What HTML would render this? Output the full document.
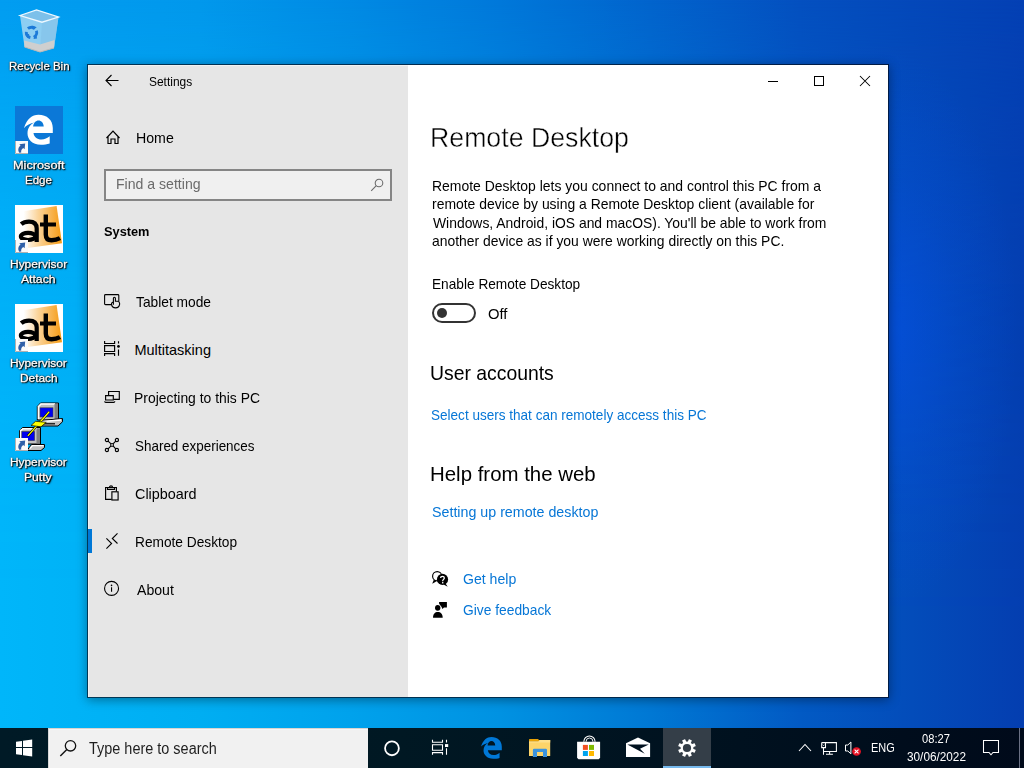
<!DOCTYPE html>
<html><head><meta charset="utf-8"><style>
*{margin:0;padding:0;box-sizing:border-box}
html,body{width:1024px;height:768px;overflow:hidden}
body{position:relative;font-family:"Liberation Sans", sans-serif;background:#0a7ad8}
.t{position:absolute;white-space:pre;line-height:1;font-family:"Liberation Sans", sans-serif}
.a{position:absolute}
svg{position:absolute;overflow:visible}
.lbl{text-shadow:0 0 1px #000,1px 1px 2px #000,0 1px 3px rgba(0,0,0,.8)}
</style></head>
<body>
<div class="a" style="left:0;top:0;width:1024px;height:768px;background:linear-gradient(to right,rgb(2,157,241) 0px,rgb(2,152,236) 200px,rgb(0,138,228) 350px,rgb(0,120,218) 500px,rgb(2,100,205) 650px,rgb(4,80,192) 800px,rgb(4,64,180) 1024px)"></div>
<div class="a" style="left:0;top:0;width:1024px;height:768px;background:linear-gradient(to right,rgb(0,182,250) 0px,rgb(0,174,242) 200px,rgb(0,162,236) 350px,rgb(0,146,226) 500px,rgb(0,120,212) 650px,rgb(2,90,196) 800px,rgb(4,62,176) 1024px);-webkit-mask-image:linear-gradient(to bottom,rgba(0,0,0,0) 0px,rgba(0,0,0,.33) 90px,rgba(0,0,0,.62) 200px,rgba(0,0,0,.78) 300px,rgba(0,0,0,.95) 500px,#000 620px,#000 768px);mask-image:linear-gradient(to bottom,rgba(0,0,0,0) 0px,rgba(0,0,0,.33) 90px,rgba(0,0,0,.62) 200px,rgba(0,0,0,.78) 300px,rgba(0,0,0,.95) 500px,#000 620px,#000 768px)"></div>
<div class="a" style="left:0;top:0;width:1024px;height:768px;background:radial-gradient(ellipse 130px 280px at 888px 330px,rgba(6,80,236,.55) 0%,rgba(6,80,236,.2) 55%,rgba(6,80,236,0) 100%)"></div>
<svg style="left:15px;top:7px" width="48" height="48" viewBox="0 0 48 48">
<path d="M5 8.5 L21.5 3 L43.5 10 L39 41 L25 45 L9.5 40 Z" fill="#a6d6f2" fill-opacity="0.85"/>
<path d="M27 15.2 L43.5 10 L39 41 L25 45 Z" fill="#86c4ea" fill-opacity="0.8"/>
<path d="M5 8.5 L21.5 3 L43.5 10 L27 15.2 Z" fill="#7cc0ea"/>
<path d="M9 33.5 L25 37.5 L39.5 33 L39 41 L25 45 L9.5 40 Z" fill="#cfcfcf"/>
<path d="M9.5 40 L25 45 L39 41" fill="none" stroke="#b8b8b8" stroke-width="1"/>
<path d="M5 8.5 L21.5 3 L43.5 10 L27 15.2 Z" fill="none" stroke="#eef8ff" stroke-width="1.3"/>
<g transform="translate(16.5 25.5) rotate(-20)"><circle r="5.2" fill="none" stroke="#1c7ad8" stroke-width="2.9" stroke-dasharray="7.5 3.4"/><path d="M3.2 -6.2 L6.8 -3.2 L2.2 -2.2 Z M-6.8 -0.6 L-5.6 4 L-2.6 0.6 Z M3.6 4.6 L-0.6 6.6 L3.2 7.6 Z" fill="#1c7ad8"/></g>
</svg>
<svg style="left:15px;top:106px" width="48" height="48" viewBox="0 0 48 48">
<rect x="0" y="0" width="48" height="48" fill="#0b78d7"/>
<path d="M9 21.9 C12 13 17 8.75 23.5 8.75 C32 8.75 37.8 14 37.8 22 V27 H18.5 C19 31 22 33.5 26.5 33.5 C29.5 33.5 32.5 32 34.7 30.3 V37.5 C32 38.5 29 38.75 26 38.75 C17 38.75 12.5 33 12.5 27.5 C12.5 22.5 15 18.5 19.4 16.6 C15.5 17.5 11.5 19.5 9 21.9 Z M18.1 20.6 C18.6 16.5 20.8 14.4 23.5 14.4 C26.3 14.4 28.5 16.5 28.75 20.6 Z" fill="#fff" fill-rule="evenodd"/>
</svg>
<svg style="left:15px;top:141px" width="13" height="13" viewBox="0 0 13 13"><rect x="0" y="0" width="13" height="13" fill="#fafafa"/><path d="M0.5 0 V12.5 H13" fill="none" stroke="#b0b0b0" stroke-width="1"/><path d="M4.2 11.8 C2.6 9.5 3 6.5 5.5 4.6 L4.3 3.2 L10.2 2.4 L9.6 8.3 L8.2 6.9 C6.6 8 5.8 9.8 6.3 11.6 Z" fill="#2e5fa8"/></svg>
<svg style="left:15px;top:205px" width="48" height="48" viewBox="0 0 48 48">
<defs><linearGradient id="og205" x1="0" y1="0" x2="1" y2="0"><stop offset="0" stop-color="#fff"/><stop offset="0.12" stop-color="#fff"/><stop offset="0.45" stop-color="#fbd49a"/><stop offset="1" stop-color="#f59a12"/></linearGradient></defs>
<rect x="0" y="0" width="48" height="48" fill="#fff"/>
<path d="M3.5 7 L41.6 0.9 L47 38.2 L12.5 43 L3.5 43 Z" fill="url(#og205)"/>
<g fill="none" stroke="#000" stroke-width="4.2">
<path d="M6.2 19.2 C8.5 17.2 11.2 16.6 14 16.6 C19.5 16.6 21.7 19 21.7 23.5 V37"/>
<ellipse cx="13.1" cy="31.4" rx="7.2" ry="3.6"/>
<path d="M30.8 9.4 V29.5 C30.8 33.5 33 35.3 36.5 35.3 C39.5 35.3 42.5 34.6 45 33.2" stroke-width="4.4"/>
<path d="M25 19.5 H41" stroke-width="4"/>
</g>
</svg>
<svg style="left:15px;top:240px" width="13" height="13" viewBox="0 0 13 13"><rect x="0" y="0" width="13" height="13" fill="#fafafa"/><path d="M0.5 0 V12.5 H13" fill="none" stroke="#b0b0b0" stroke-width="1"/><path d="M4.2 11.8 C2.6 9.5 3 6.5 5.5 4.6 L4.3 3.2 L10.2 2.4 L9.6 8.3 L8.2 6.9 C6.6 8 5.8 9.8 6.3 11.6 Z" fill="#2e5fa8"/></svg>
<svg style="left:15px;top:304px" width="48" height="48" viewBox="0 0 48 48">
<defs><linearGradient id="og304" x1="0" y1="0" x2="1" y2="0"><stop offset="0" stop-color="#fff"/><stop offset="0.12" stop-color="#fff"/><stop offset="0.45" stop-color="#fbd49a"/><stop offset="1" stop-color="#f59a12"/></linearGradient></defs>
<rect x="0" y="0" width="48" height="48" fill="#fff"/>
<path d="M3.5 7 L41.6 0.9 L47 38.2 L12.5 43 L3.5 43 Z" fill="url(#og304)"/>
<g fill="none" stroke="#000" stroke-width="4.2">
<path d="M6.2 19.2 C8.5 17.2 11.2 16.6 14 16.6 C19.5 16.6 21.7 19 21.7 23.5 V37"/>
<ellipse cx="13.1" cy="31.4" rx="7.2" ry="3.6"/>
<path d="M30.8 9.4 V29.5 C30.8 33.5 33 35.3 36.5 35.3 C39.5 35.3 42.5 34.6 45 33.2" stroke-width="4.4"/>
<path d="M25 19.5 H41" stroke-width="4"/>
</g>
</svg>
<svg style="left:15px;top:339px" width="13" height="13" viewBox="0 0 13 13"><rect x="0" y="0" width="13" height="13" fill="#fafafa"/><path d="M0.5 0 V12.5 H13" fill="none" stroke="#b0b0b0" stroke-width="1"/><path d="M4.2 11.8 C2.6 9.5 3 6.5 5.5 4.6 L4.3 3.2 L10.2 2.4 L9.6 8.3 L8.2 6.9 C6.6 8 5.8 9.8 6.3 11.6 Z" fill="#2e5fa8"/></svg>
<svg style="left:15px;top:400px" width="48" height="52" viewBox="0 0 48 52">
<path d="M22.3 6.5 L25.5 3 L43.5 3 L43.5 20 L22.3 20 Z" fill="#c0c0c0" stroke="#000" stroke-width="1"/>
<path d="M23.5 19 V6.5 L26 4 H40" fill="none" stroke="#fff" stroke-width="1.6"/>
<rect x="39.5" y="4" width="3.5" height="15.5" fill="#808080"/>
<rect x="25" y="7.8" width="13" height="9.2" fill="#0000f0" stroke="#404040" stroke-width="0.6"/>
<path d="M20.5 26 L26.5 20.5 L47.5 18.5 L47.5 21.8 L43 26 Z" fill="#c0c0c0" stroke="#000" stroke-width="1"/>
<path d="M24 24.5 L27.5 21.5 L46 20" fill="none" stroke="#fff" stroke-width="1.4"/>
<path d="M28 23.8 H40" stroke="#000" stroke-width="1.2"/>
<path d="M4.5 30.5 L7.5 27.5 L25.5 27.5 L25.5 44 L4.5 44 Z" fill="#c0c0c0" stroke="#000" stroke-width="1"/>
<path d="M5.7 43 V30.5 L8 28.7 H22" fill="none" stroke="#fff" stroke-width="1.6"/>
<rect x="21.5" y="28.5" width="3.5" height="15" fill="#808080"/>
<rect x="6.8" y="31.5" width="12.8" height="9.1" fill="#0000f0" stroke="#404040" stroke-width="0.6"/>
<path d="M12 50.5 L16.5 44.5 L29.5 44.5 L29.5 47.5 L26 50.5 Z" fill="#c0c0c0" stroke="#000" stroke-width="1"/>
<path d="M15 48.5 L17.5 45.6 L28.5 45.6" fill="none" stroke="#fff" stroke-width="1.3"/>
<path d="M34.2 11.8 L12.9 35.9" stroke="#000" stroke-width="2.4"/>
<path d="M34.2 11.8 L12.9 35.9" stroke="#ffff00" stroke-width="1.3"/>
<path d="M16 25.5 L20.5 21.3 L31.3 22.3 L26 26.8 Z" fill="#ffff00" stroke="#000" stroke-width="0.7"/>
</svg>
<svg style="left:15px;top:438px" width="13" height="13" viewBox="0 0 13 13"><rect x="0" y="0" width="13" height="13" fill="#fafafa"/><path d="M0.5 0 V12.5 H13" fill="none" stroke="#b0b0b0" stroke-width="1"/><path d="M4.2 11.8 C2.6 9.5 3 6.5 5.5 4.6 L4.3 3.2 L10.2 2.4 L9.6 8.3 L8.2 6.9 C6.6 8 5.8 9.8 6.3 11.6 Z" fill="#2e5fa8"/></svg>
<div class="a" style="left:87px;top:64px;width:802px;height:634px;border:1px solid rgba(0,8,24,.72);box-shadow:0 2px 10px rgba(0,0,0,0.38)"></div>
<div class="a" style="left:88px;top:65px;width:320px;height:632px;background:#e6e6e6;border-top:1px solid #f2f2f2;border-left:1px solid #f2f2f2"></div>
<div class="a" style="left:408px;top:65px;width:480px;height:632px;background:#fff"></div>
<svg style="left:105px;top:74px" width="14" height="13" viewBox="0 0 14 13"><path d="M1 6.5 H13.5 M6.5 1 L1 6.5 L6.5 12" fill="none" stroke="#000" stroke-width="1.1"/></svg>
<svg style="left:105px;top:130px" width="16" height="15" viewBox="0 0 16 15"><path d="M1.5 8 L8 1.2 L14.5 8 M3 6.5 V13.5 H6 V9 H10 V13.5 H13 V6.5" fill="none" stroke="#000" stroke-width="1.2"/></svg>
<div class="a" style="left:104px;top:169px;width:288px;height:32px;border:2px solid #858585;background:#f0f0f0"></div>
<svg style="left:370px;top:178px" width="14" height="14" viewBox="0 0 14 14"><circle cx="9" cy="5" r="3.8" fill="none" stroke="#6a6a6a" stroke-width="1.05"/><path d="M6.3 7.7 L1.2 12.8" stroke="#6a6a6a" stroke-width="1.1"/></svg>
<svg style="left:104px;top:294px" width="17" height="17" viewBox="0 0 17 17"><path d="M7.6 10.6 H1.5 Q0.6 10.6 0.6 9.7 V1.5 Q0.6 0.6 1.5 0.6 H13.9 Q14.8 0.6 14.8 1.5 V7.3" fill="none" stroke="#000" stroke-width="1.1"/><path d="M9.4 10.8 V4.3 A1 1 0 0 1 11.4 4.3 V7.3 H13.6 A2.1 2.1 0 0 1 15.6 9.3 V10.4 A4.1 4.1 0 0 1 7.5 10.4 V9.9 A1.9 1.9 0 0 1 9.4 8" fill="none" stroke="#000" stroke-width="1.1"/></svg>
<svg style="left:104px;top:341px" width="17" height="16" viewBox="0 0 17 16"><path d="M0.6 0 V2.5 H10.6 V0 M0.6 4.6 H10.6 V10.5 H0.6 Z M0.6 15 V12.6 H10.6 V15 M14.5 0.2 V2.6 M14.5 8.6 V14.8" fill="none" stroke="#000" stroke-width="1.15"/><circle cx="14.5" cy="5.4" r="1.35" fill="#000"/></svg>
<svg style="left:104px;top:390px" width="17" height="14" viewBox="0 0 17 14"><path d="M4.6 5.4 V1.5 H15.3 V9.3 H9.5" fill="none" stroke="#000" stroke-width="1.15"/><path d="M1.6 5.6 H9.3 V10 H1.6 Z" fill="none" stroke="#000" stroke-width="1.15"/><path d="M0.7 11.3 Q0.7 12.4 1.8 12.4 H9.7 Q10.8 12.4 10.8 11.3" fill="none" stroke="#000" stroke-width="1.15"/></svg>
<svg style="left:104px;top:438px" width="17" height="16" viewBox="0 0 17 16"><g fill="none" stroke="#000" stroke-width="1.15"><circle cx="2.9" cy="1.95" r="1.6"/><circle cx="12.9" cy="1.95" r="1.6"/><circle cx="2.9" cy="12" r="1.6"/><circle cx="12.9" cy="12" r="1.6"/><rect x="6.75" y="5.65" width="2.6" height="2.6" stroke-width="1"/><path d="M4.1 3.2 L6.8 5.7 M11.7 3.2 L9.3 5.7 M4.1 10.8 L6.8 8.2 M11.7 10.8 L9.3 8.2"/></g></svg>
<svg style="left:104px;top:485px" width="16" height="17" viewBox="0 0 16 17"><g fill="none" stroke="#000" stroke-width="1.15"><path d="M7.6 14.3 H1.6 V2.5 H12.4 V6.6"/><path d="M3.5 2.5 V4.3 H10.5 V2.5"/><path d="M5.4 2.5 A1.6 1.6 0 0 1 8.6 2.5"/><rect x="7.9" y="6.8" width="6.2" height="8.2"/></g></svg>
<svg style="left:105px;top:533px" width="14" height="17" viewBox="0 0 14 17"><path d="M1.4 5.3 L6.6 10.5 L1.4 15.7 M12.5 0.3 L7.3 5.5 L12.5 10.5" fill="none" stroke="#000" stroke-width="1.1"/></svg>
<svg style="left:104px;top:580px" width="16" height="17" viewBox="0 0 16 17"><circle cx="7.55" cy="8.4" r="7" fill="none" stroke="#000" stroke-width="1.1"/><path d="M7.55 7.3 V11.8" fill="none" stroke="#000" stroke-width="1.1"/><circle cx="7.55" cy="5.4" r="0.8" fill="#000"/></svg>
<div class="a" style="left:88px;top:529px;width:4px;height:24px;background:#0078d7"></div>
<svg style="left:768px;top:81px" width="10" height="1"><rect x="0" y="0" width="10" height="1" fill="#000"/></svg>
<svg style="left:814px;top:76px" width="10" height="10" viewBox="0 0 10 10"><rect x="0.5" y="0.5" width="9" height="9" fill="none" stroke="#000" stroke-width="1"/></svg>
<svg style="left:859px;top:75px" width="12" height="12" viewBox="0 0 12 12"><path d="M1 1 L11 11 M11 1 L1 11" stroke="#000" stroke-width="1.05"/></svg>
<div class="a" style="left:432px;top:303px;width:44px;height:20px;border:2px solid #333;border-radius:10px;background:#fff"></div>
<div class="a" style="left:437px;top:308px;width:10px;height:10px;border-radius:5px;background:#333"></div>
<svg style="left:431px;top:570px" width="19" height="18" viewBox="0 0 19 18">
<circle cx="6.2" cy="6.2" r="4.6" fill="#fff" stroke="#000" stroke-width="1.15"/>
<path d="M2.9 9.6 L1.2 13.7 L5.2 11.6 Z" fill="#000"/>
<circle cx="11.5" cy="9.4" r="5.6" fill="#000"/>
<path d="M14.4 13.2 L16.7 16.7 L12.6 14.6 Z" fill="#000"/>
<path d="M9.6 8.1 C9.6 7 10.4 6.3 11.4 6.3 C12.5 6.3 13.3 7 13.3 8 C13.3 9.3 11.7 9.5 11.7 11 V11.3" fill="none" stroke="#fff" stroke-width="1.3"/>
<rect x="11" y="12.1" width="1.4" height="1.3" fill="#fff"/>
</svg>
<svg style="left:432px;top:602px" width="17" height="18" viewBox="0 0 17 18">
<ellipse cx="5.7" cy="5.8" rx="2.7" ry="2.9" fill="#000"/>
<path d="M1 15.8 C1 12 3 10 5.8 10 C8.6 10 10.7 12 10.7 15.8 Z" fill="#000"/>
<path d="M7.1 0 H14.9 V5.4 H12 L10.4 6.9 L9.6 5 L7.1 1.8 Z" fill="#000"/>
</svg>
<div class="a" style="left:0;top:728px;width:1024px;height:40px;background:linear-gradient(to right,#001a26 0px,#001823 400px,#00111f 740px,#000a1a 1024px)"></div>
<div class="a" style="left:48px;top:728px;width:320px;height:40px;background:#f1f1f1;border-top:1px solid #dad4d0;border-left:1px solid #d8d8d8;box-shadow:inset 1px 1px 0 #f6f6f6"></div>
<svg style="left:0px;top:728px" width="48" height="40" viewBox="0 728 48 40"><path d="M16 741.8 L22 740.9 V747 H16 Z M23 740.8 L32.2 739.6 V747 H23 Z M16 748 H22 V755.1 L16 754.2 Z M23 748 H32.2 V756.4 L23 755.2 Z" fill="#fff"/></svg>
<svg style="left:59px;top:739px" width="19" height="19" viewBox="0 0 19 19"><circle cx="11.5" cy="6.8" r="5.2" fill="none" stroke="#111" stroke-width="1.3"/><path d="M7.8 10.5 L1.3 17" stroke="#111" stroke-width="1.4"/></svg>
<svg style="left:383px;top:740px" width="18" height="18" viewBox="0 0 18 18"><circle cx="8.95" cy="8.35" r="6.9" fill="none" stroke="#fff" stroke-width="1.8"/></svg>
<svg style="left:431px;top:739px" width="18" height="17" viewBox="0 0 18 17"><path d="M1.5 0.8 V3.2 H11.5 V0.8 M1.5 5.7 H11.5 V11.2 H1.5 Z M1.5 15.7 V13.6 H11.5 V15.7 M15.5 0.8 V3.5 M15.5 9.2 V15.7" fill="none" stroke="#fff" stroke-width="1.1"/><rect x="14" y="5.1" width="3.2" height="2.9" fill="#fff"/></svg>
<svg style="left:480.8px;top:737px" width="20.8" height="21.8" viewBox="9 8.75 28.8 30" preserveAspectRatio="none"><path d="M9 21.9 C12 13 17 8.75 23.5 8.75 C32 8.75 37.8 14 37.8 22 V27 H18.5 C19 31 22 33.5 26.5 33.5 C29.5 33.5 32.5 32 34.7 30.3 V37.5 C32 38.5 29 38.75 26 38.75 C17 38.75 12.5 33 12.5 27.5 C12.5 22.5 15 18.5 19.4 16.6 C15.5 17.5 11.5 19.5 9 21.9 Z M18.1 20.6 C18.6 16.5 20.8 14.4 23.5 14.4 C26.3 14.4 28.5 16.5 28.75 20.6 Z" fill="#0078d7" fill-rule="evenodd"/></svg>
<svg style="left:529px;top:739px" width="22" height="19" viewBox="0 0 22 19">
<path d="M0 0.6 Q0 0 0.6 0 H9 L10 1 V2.8 H0 Z" fill="#e9a206"/>
<path d="M0 2.6 H9.5 L10.6 1 H21.2 V17 H0 Z" fill="#fcd46a"/>
<path d="M0 2.6 H9.5 L10.6 1 H21.2 V3.5 H0 Z" fill="#fde08c"/>
<path d="M3.9 18 V11 Q3.9 9.8 5.1 9.8 H16.8 Q18 9.8 18 11 V18 H14 V13 H8 V18 Z" fill="#3b93dd"/>
</svg>
<svg style="left:576px;top:736px" width="26" height="24" viewBox="0 0 26 24">
<path d="M7.8 5.8 A5.65 5.8 0 0 1 19.1 5.8" fill="none" stroke="#fff" stroke-width="1.1"/>
<path d="M10 5.8 A3.5 3.8 0 0 1 17 5.8" fill="none" stroke="#fff" stroke-width="0.9"/>
<path d="M1.1 5.8 H24.1 V21.8 L22.7 23.2 H2.5 L1.1 21.8 Z" fill="#fff"/>
<rect x="6.9" y="8.9" width="5" height="5" fill="#f25022"/><rect x="13" y="8.9" width="5" height="5" fill="#7fba00"/>
<rect x="6.9" y="15" width="5" height="5" fill="#00a4ef"/><rect x="13" y="15" width="5" height="5" fill="#ffb900"/>
</svg>
<svg style="left:626px;top:737px" width="25" height="21" viewBox="0 0 25 21">
<path d="M0 6.3 L12 0.6 L24.1 6.3 V20 H0 Z" fill="#fff"/>
<path d="M1.3 7.4 H22.8 L14 11.8 L18.8 16.7 Z" fill="#00111f"/>
</svg>
<div class="a" style="left:663px;top:728px;width:48px;height:40px;background:#343e48"></div>
<div class="a" style="left:663px;top:766px;width:48px;height:2px;background:#76b9ed"></div>
<svg style="left:677px;top:738px" width="20" height="20" viewBox="0 0 20 20">
<g transform="translate(10 10)" fill="#fff">
<circle r="6.4"/>
<g id="tooth"><rect x="-1.65" y="-8.9" width="3.3" height="3.6" rx="0.4" transform="rotate(22.5)"/></g>
<use href="#tooth" transform="rotate(45)"/><use href="#tooth" transform="rotate(90)"/><use href="#tooth" transform="rotate(135)"/>
<use href="#tooth" transform="rotate(180)"/><use href="#tooth" transform="rotate(225)"/><use href="#tooth" transform="rotate(270)"/><use href="#tooth" transform="rotate(315)"/>
<circle r="4.1" fill="#343e48"/>
</g></svg>
<svg style="left:798px;top:743px" width="14" height="9" viewBox="0 0 14 9"><path d="M1 8 L7 1.5 L13 8" fill="none" stroke="#fff" stroke-width="1.1"/></svg>
<svg style="left:820px;top:741px" width="18" height="15" viewBox="0 0 18 15">
<path d="M1.7 1.6 H16.4 V10.4 H3.5 M1.7 1.6 V6.6 H5.5 V1.6 M3.5 6.6 V13.8 M9.6 10.4 V13.3 M6 13.3 H12.9" fill="none" stroke="#fff" stroke-width="1.05"/>
<path d="M2.7 3.7 L3.6 4.6 L4.5 3.7" fill="none" stroke="#fff" stroke-width="0.8"/>
</svg>
<svg style="left:844px;top:741px" width="20" height="16" viewBox="0 0 20 16">
<path d="M1.5 4 H3.8 L6.9 1 V12.8 L3.8 10 H1.5 Z" fill="none" stroke="#fff" stroke-width="1"/>
<circle cx="12.55" cy="10.5" r="4.35" fill="#e81123"/>
<path d="M10.6 8.55 L14.5 12.45 M14.5 8.55 L10.6 12.45" stroke="#fff" stroke-width="1.1"/>
</svg>
<svg style="left:983px;top:740px" width="17" height="17" viewBox="0 0 17 17"><path d="M0.5 0.5 H15.5 V12.5 H10 L8 14.8 L6 12.5 H0.5 Z" fill="none" stroke="#fff" stroke-width="1.05"/></svg>
<div class="a" style="left:1019px;top:728px;width:1px;height:40px;background:#6a7084"></div>
<div class="t" id="lbl_rb" style="left:8.92px;top:59.60px;font-size:11.7px;color:#fff;transform:scaleX(0.9808);transform-origin:0 0;text-shadow:1px 1px 1px #000,0 0 2px #000,0 0 1px #000,1px 1px 2px rgba(0,0,0,.8);-webkit-text-stroke:0.3px #fff;">Recycle Bin</div>
<div class="t" id="lbl_ms" style="left:12.66px;top:159.10px;font-size:11.7px;color:#fff;transform:scaleX(1.0870);transform-origin:0 0;text-shadow:1px 1px 1px #000,0 0 2px #000,0 0 1px #000,1px 1px 2px rgba(0,0,0,.8);-webkit-text-stroke:0.3px #fff;">Microsoft</div>
<div class="t" id="lbl_edge" style="left:24.61px;top:173.50px;font-size:11.7px;color:#fff;transform:scaleX(0.9865);transform-origin:0 0;text-shadow:1px 1px 1px #000,0 0 2px #000,0 0 1px #000,1px 1px 2px rgba(0,0,0,.8);-webkit-text-stroke:0.3px #fff;">Edge</div>
<div class="t" id="lbl_hv1" style="left:9.58px;top:258.25px;font-size:11.7px;color:#fff;transform:scaleX(1.0236);transform-origin:0 0;text-shadow:1px 1px 1px #000,0 0 2px #000,0 0 1px #000,1px 1px 2px rgba(0,0,0,.8);-webkit-text-stroke:0.3px #fff;">Hypervisor</div>
<div class="t" id="lbl_att" style="left:21.25px;top:272.60px;font-size:11.7px;color:#fff;transform:scaleX(1.0409);transform-origin:0 0;text-shadow:1px 1px 1px #000,0 0 2px #000,0 0 1px #000,1px 1px 2px rgba(0,0,0,.8);-webkit-text-stroke:0.3px #fff;">Attach</div>
<div class="t" id="lbl_hv2" style="left:9.88px;top:356.80px;font-size:11.7px;color:#fff;transform:scaleX(1.0164);transform-origin:0 0;text-shadow:1px 1px 1px #000,0 0 2px #000,0 0 1px #000,1px 1px 2px rgba(0,0,0,.8);-webkit-text-stroke:0.3px #fff;">Hypervisor</div>
<div class="t" id="lbl_det" style="left:20.09px;top:371.70px;font-size:11.7px;color:#fff;transform:scaleX(1.0143);transform-origin:0 0;text-shadow:1px 1px 1px #000,0 0 2px #000,0 0 1px #000,1px 1px 2px rgba(0,0,0,.8);-webkit-text-stroke:0.3px #fff;">Detach</div>
<div class="t" id="lbl_hv3" style="left:9.88px;top:455.70px;font-size:11.7px;color:#fff;transform:scaleX(1.0164);transform-origin:0 0;text-shadow:1px 1px 1px #000,0 0 2px #000,0 0 1px #000,1px 1px 2px rgba(0,0,0,.8);-webkit-text-stroke:0.3px #fff;">Hypervisor</div>
<div class="t" id="lbl_put" style="left:23.96px;top:470.50px;font-size:11.7px;color:#fff;transform:scaleX(1.0385);transform-origin:0 0;text-shadow:1px 1px 1px #000,0 0 2px #000,0 0 1px #000,1px 1px 2px rgba(0,0,0,.8);-webkit-text-stroke:0.3px #fff;">Putty</div>
<div class="t" id="settings" style="left:149.37px;top:76.10px;font-size:12.8px;color:#000;transform:scaleX(0.9333);transform-origin:0 0;">Settings</div>
<div class="t" id="home" style="left:135.62px;top:130.75px;font-size:14.5px;color:#000;transform:scaleX(0.9770);transform-origin:0 0;">Home</div>
<div class="t" id="find" style="left:115.61px;top:176.80px;font-size:14.2px;color:#6b6b6b;transform:scaleX(0.9928);transform-origin:0 0;">Find a setting</div>
<div class="t" id="system" style="left:103.73px;top:224.70px;font-size:13.2px;color:#000;font-weight:700;transform:scaleX(0.9689);transform-origin:0 0;">System</div>
<div class="t" id="nav_tab" style="left:136.30px;top:295.20px;font-size:14.5px;color:#000;transform:scaleX(0.9494);transform-origin:0 0;">Tablet mode</div>
<div class="t" id="nav_mul" style="left:134.40px;top:343.00px;font-size:14.5px;color:#000;">Multitasking</div>
<div class="t" id="nav_pro" style="left:134.44px;top:390.90px;font-size:14.5px;color:#000;transform:scaleX(0.9592);transform-origin:0 0;">Projecting to this PC</div>
<div class="t" id="nav_sha" style="left:134.77px;top:439.30px;font-size:14.5px;color:#000;transform:scaleX(0.9266);transform-origin:0 0;">Shared experiences</div>
<div class="t" id="nav_cli" style="left:134.71px;top:487.20px;font-size:14.5px;color:#000;transform:scaleX(0.9917);transform-origin:0 0;">Clipboard</div>
<div class="t" id="nav_rem" style="left:134.75px;top:535.20px;font-size:14.5px;color:#000;transform:scaleX(0.9449);transform-origin:0 0;">Remote Desktop</div>
<div class="t" id="nav_abo" style="left:136.50px;top:583.00px;font-size:14.5px;color:#000;transform:scaleX(0.9737);transform-origin:0 0;">About</div>
<div class="t" id="h1" style="left:429.83px;top:123.00px;font-size:28.5px;color:#000;transform:scaleX(0.9368);transform-origin:0 0;-webkit-text-stroke:0.45px #fff;">Remote Desktop</div>
<div class="t" id="p1" style="left:431.82px;top:179.00px;font-size:14.2px;color:#000;transform:scaleX(0.9828);transform-origin:0 0;">Remote Desktop lets you connect to and control this PC from a</div>
<div class="t" id="p2" style="left:431.52px;top:197.10px;font-size:14.2px;color:#000;transform:scaleX(0.9813);transform-origin:0 0;">remote device by using a Remote Desktop client (available for</div>
<div class="t" id="p3" style="left:432.50px;top:215.50px;font-size:14.2px;color:#000;transform:scaleX(0.9791);transform-origin:0 0;">Windows, Android, iOS and macOS). You'll be able to work from</div>
<div class="t" id="p4" style="left:431.52px;top:233.70px;font-size:14.2px;color:#000;transform:scaleX(0.9797);transform-origin:0 0;">another device as if you were working directly on this PC.</div>
<div class="t" id="enable" style="left:431.64px;top:277.10px;font-size:14.2px;color:#000;transform:scaleX(0.9638);transform-origin:0 0;">Enable Remote Desktop</div>
<div class="t" id="off" style="left:488.46px;top:307.25px;font-size:14.2px;color:#000;transform:scaleX(1.0417);transform-origin:0 0;">Off</div>
<div class="t" id="h2a" style="left:430.02px;top:363.75px;font-size:19.8px;color:#000;transform:scaleX(0.9792);transform-origin:0 0;">User accounts</div>
<div class="t" id="l1" style="left:431.15px;top:407.75px;font-size:14.2px;color:#0676d6;transform:scaleX(0.9547);transform-origin:0 0;">Select users that can remotely access this PC</div>
<div class="t" id="h2b" style="left:430.33px;top:464.60px;font-size:19.8px;color:#000;transform:scaleX(1.0323);transform-origin:0 0;">Help from the web</div>
<div class="t" id="l2" style="left:431.90px;top:504.60px;font-size:14.2px;color:#0676d6;transform:scaleX(1.0043);transform-origin:0 0;">Setting up remote desktop</div>
<div class="t" id="gethelp" style="left:463.31px;top:571.80px;font-size:14.2px;color:#0676d6;transform:scaleX(0.9923);transform-origin:0 0;">Get help</div>
<div class="t" id="feedback" style="left:463.33px;top:602.90px;font-size:14.2px;color:#0676d6;transform:scaleX(0.9730);transform-origin:0 0;">Give feedback</div>
<div class="t" id="typehere" style="left:88.60px;top:740.90px;font-size:15.6px;color:#1e1e1e;transform:scaleX(0.9270);transform-origin:0 0;">Type here to search</div>
<div class="t" id="eng" style="left:870.61px;top:741.75px;font-size:12.3px;color:#fff;transform:scaleX(0.8900);transform-origin:0 0;">ENG</div>
<div class="t" id="time" style="left:921.60px;top:733.00px;font-size:12.3px;color:#fff;transform:scaleX(0.9050);transform-origin:0 0;">08:27</div>
<div class="t" id="date" style="left:906.99px;top:750.75px;font-size:12.3px;color:#fff;transform:scaleX(0.9583);transform-origin:0 0;">30/06/2022</div>

</body></html>
